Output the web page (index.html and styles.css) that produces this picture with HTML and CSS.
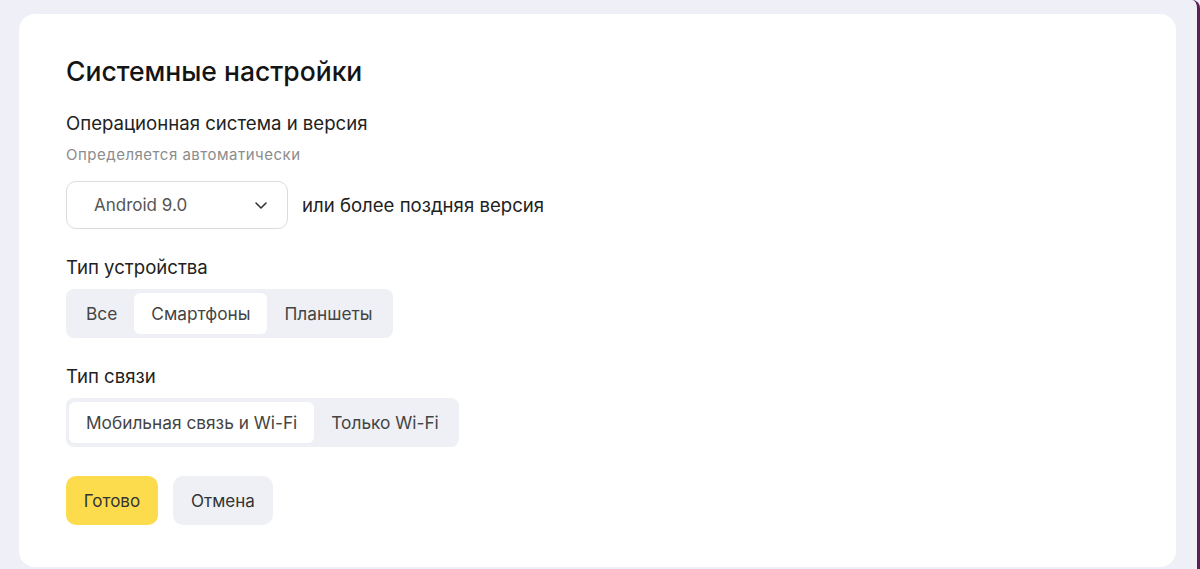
FILE: index.html
```html
<!DOCTYPE html>
<html lang="ru">
<head>
<meta charset="utf-8">
<title>Системные настройки</title>
<link rel="stylesheet" href="styles.css">
</head>
<body>
<div class="frame">
  <div class="card">
    <h1 class="title">Системные настройки</h1>

    <div class="label label-os">Операционная система и версия</div>
    <div class="hint">Определяется автоматически</div>
    <div class="os-row">
      <div class="select">
        <span class="select-value">Android 9.0</span>
        <svg class="chevron" width="16" height="16" viewBox="0 0 16 16" aria-hidden="true">
          <path d="M3 6l5 5 5-5" fill="none" stroke="#333" stroke-width="1.6" stroke-linecap="round" stroke-linejoin="round"/>
        </svg>
      </div>
      <span class="os-suffix">или более поздняя версия</span>
    </div>

    <div class="label label-section">Тип устройства</div>
    <div class="segmented">
      <span class="seg">Все</span>
      <span class="seg seg-active">Смартфоны</span>
      <span class="seg">Планшеты</span>
    </div>

    <div class="label label-section">Тип связи</div>
    <div class="segmented">
      <span class="seg seg-active">Мобильная связь и Wi-Fi</span>
      <span class="seg">Только Wi-Fi</span>
    </div>

    <div class="actions">
      <button class="btn btn-primary">Готово</button>
      <button class="btn btn-secondary">Отмена</button>
    </div>
  </div>
</div>
</body>
</html>
```

FILE: styles.css
```css
* { box-sizing: border-box; }

html, body {
  margin: 0;
  height: 100%;
}

body {
  background: #eff0f7;
  font-family: Inter, Roboto, "Liberation Sans", sans-serif;
  color: #1f1f1f;
  overflow: hidden;
}

.frame {
  height: 100%;
  padding: 14px 21px 0 19px;
  border-right: 3px solid #5a1f55;
  border-top-right-radius: 8px;
}

.card {
  background: #ffffff;
  border-radius: 16px;
  height: 553px;
  padding: 41px 47px 0 47px;
}

.title {
  margin: 0;
  font-size: 26.5px;
  line-height: 32px;
  font-weight: 500;
  color: #141414;
}

.label {
  font-size: 18.6px;
  line-height: 24px;
  color: #222;
}

.label-os {
  margin-top: 24px;
}

.hint {
  margin-top: 10px;
  font-size: 15px;
  letter-spacing: 0.5px;
  line-height: 20px;
  color: #8c8c8c;
}

.os-row {
  display: flex;
  align-items: center;
  gap: 14px;
  margin-top: 16px;
}

.select {
  width: 222px;
  height: 48px;
  border: 1px solid #dcdcdc;
  border-radius: 10px;
  display: flex;
  align-items: center;
  justify-content: space-between;
  padding: 0 18px 0 27px;
}

.select-value {
  font-size: 17px;
  color: #555;
}

.chevron { display: block; }

.os-suffix {
  font-size: 18.6px;
  color: #222;
}

.label-section {
  margin-top: 26px;
}

.segmented {
  display: inline-flex;
  margin-top: 10px;
  padding: 4px 3px;
  background: #eef0f5;
  border-radius: 8px;
}

.seg {
  height: 41px;
  display: flex;
  align-items: center;
  padding: 0 17px;
  font-size: 17.3px;
  color: #444;
  border-radius: 6px;
}

.seg-active {
  background: #ffffff;
}

.actions {
  display: flex;
  gap: 15px;
  margin-top: 29px;
}

.btn {
  height: 49px;
  border: none;
  border-radius: 10px;
  font-family: inherit;
  font-size: 17px;
  color: #333;
  padding: 0;
}

.btn-primary {
  background: #fcdb4d;
  width: 92px;
}

.btn-secondary {
  background: #eef0f5;
  width: 100px;
}
```
